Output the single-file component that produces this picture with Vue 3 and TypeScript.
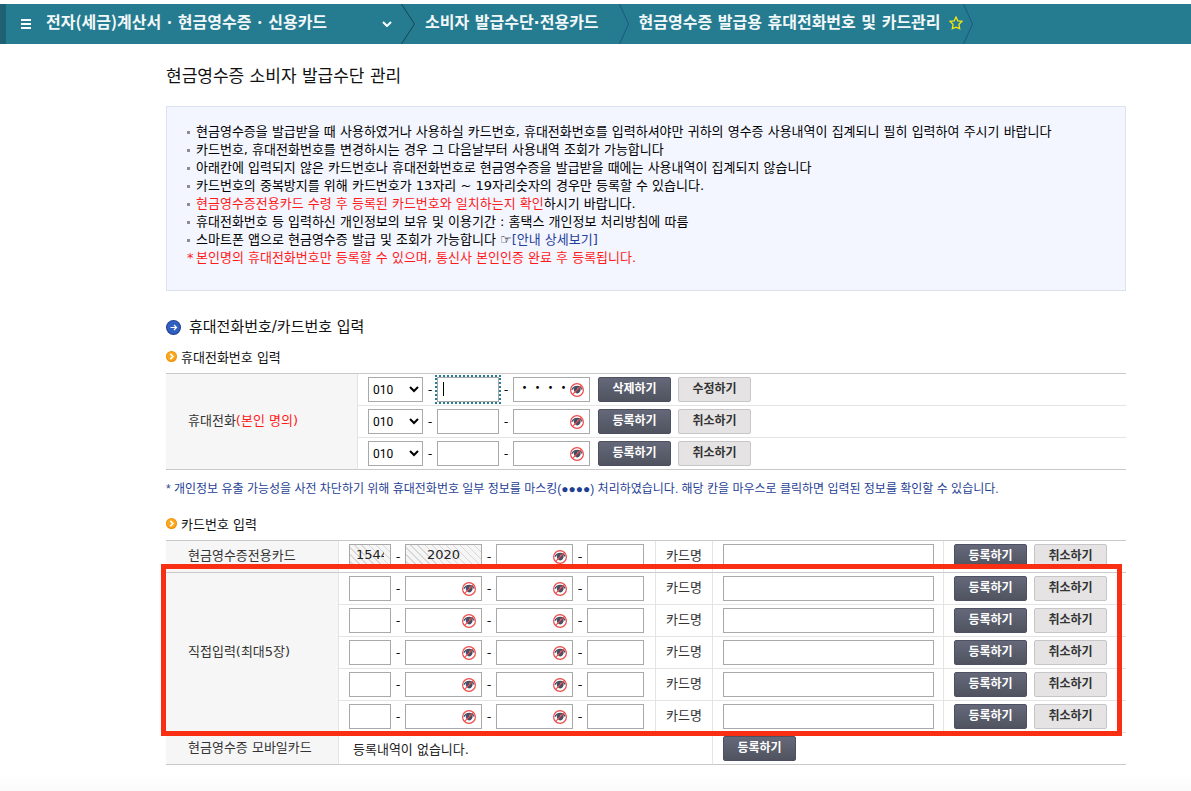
<script setup lang="ts">
import { ref } from 'vue'

interface Notice {
  mark?: string
  text: string
  link?: string
}

interface PhoneRow {
  id: number
  prefix: string
  middle: string
  last: string
  active: boolean
  primary: string
  secondary: string
}

interface CardField {
  size: string
  label: string
  masked: boolean
}

const notices: Notice[] = [
  { text: '현금영수증을 발급받을 때 사용하였거나 사용하실 카드번호, 휴대전화번호를 입력하셔야만 귀하의 영수증 사용내역이 집계되니 필히 입력하여 주시기 바랍니다' },
  { text: '카드번호, 휴대전화번호를 변경하시는 경우 그 다음날부터 사용내역 조회가 가능합니다' },
  { text: '아래칸에 입력되지 않은 카드번호나 휴대전화번호로 현금영수증을 발급받을 때에는 사용내역이 집계되지 않습니다' },
  { text: '카드번호의 중복방지를 위해 카드번호가 13자리 ~ 19자리숫자의 경우만 등록할 수 있습니다.' },
  { mark: '현금영수증전용카드 수령 후 등록된 카드번호와 일치하는지 확인', text: '하시기 바랍니다.' },
  { text: '휴대전화번호 등 입력하신 개인정보의 보유 및 이용기간 : 홈택스 개인정보 처리방침에 따름' },
  { text: '스마트폰 앱으로 현금영수증 발급 및 조회가 가능합니다 ☞', link: '[안내 상세보기]' },
]

const phones = ref<PhoneRow[]>([
  { id: 1, prefix: '010', middle: '', last: '・・・・', active: true, primary: '삭제하기', secondary: '수정하기' },
  { id: 2, prefix: '010', middle: '', last: '', active: false, primary: '등록하기', secondary: '취소하기' },
  { id: 3, prefix: '010', middle: '', last: '', active: false, primary: '등록하기', secondary: '취소하기' },
])

const cardFields: CardField[] = [
  { size: 'w-first', label: '카드번호 첫째 자리', masked: false },
  { size: 'w-mid', label: '카드번호 둘째 자리', masked: true },
  { size: 'w-mid', label: '카드번호 셋째 자리', masked: true },
  { size: 'w-last', label: '카드번호 넷째 자리', masked: false },
]

const fixedCard = ['1544', '2020', '', '']
</script>

<template>
  <div class="page">
    <svg class="defs" aria-hidden="true">
      <symbol id="eye-off" viewBox="0 0 14 14">
        <path d="M1.800 6.800C3 4.300 4.900 3.400 7.200 3.400s4.100 1 5 3.200" fill="none" stroke="#454f63" stroke-width="1.400" />
        <path d="M3.900 4.800C5.200 3.500 9.200 3.400 10.400 5c.9 2.300-.8 5.400-3.200 5.400S3.200 7.400 3.900 4.800z" fill="#454f63" />
        <circle cx="8" cy="5.400" r=".8" fill="#98a1b2" />
        <circle cx="7" cy="7" r="6.400" fill="none" stroke="#f04a4a" stroke-width="1.200" />
        <path d="M2.600 11.400L11.400 2.600" stroke="#f04a4a" stroke-width="1.200" />
      </symbol>
      <symbol id="orange-dot" viewBox="0 0 11 11">
        <circle cx="5.500" cy="5.500" r="5.500" fill="#f08c00" />
        <circle cx="5.500" cy="5.300" r="4.700" fill="#fba81c" />
        <path d="M4.300 2.900L6.900 5.500L4.300 8.100" fill="none" stroke="#fff" stroke-width="1.700" />
      </symbol>
    </svg>

    <header class="bar">
      <nav class="crumbs" aria-label="메뉴 경로">
        <button class="crumb crumb-root" type="button">
          <svg class="burger" viewBox="0 0 10 10" aria-hidden="true">
            <path d="M0 1h10M0 5h10M0 9h10" stroke="#fff" stroke-width="2" />
          </svg>
          <span>전자(세금)계산서 · 현금영수증 · 신용카드</span>
          <svg class="chevron" viewBox="0 0 10 6" aria-hidden="true">
            <path d="M1 1L5 5L9 1" fill="none" stroke="#fff" stroke-width="2" />
          </svg>
        </button>
        <svg class="sep sep-wide" viewBox="0 0 14 40" aria-hidden="true">
          <path d="M.5 0L13.500 20L.5 40" fill="none" stroke="#174653" />
        </svg>
        <a class="crumb" href="#">소비자 발급수단·전용카드</a>
        <svg class="sep" viewBox="0 0 10 40" aria-hidden="true">
          <path d="M.5 0L9.500 20L.5 40" fill="none" stroke="#1f5680" />
        </svg>
        <a class="crumb crumb-here" href="#">현금영수증 발급용 휴대전화번호 및 카드관리</a>
        <button class="star" type="button" aria-label="즐겨찾기">
          <svg viewBox="0 0 14 14" aria-hidden="true">
            <path d="M7 1L8.800 4.900L13 5.400L9.900 8.300L10.700 12.700L7 11.200L3.300 12.700L4.100 8.300L1 5.400L5.200 4.900Z" fill="none" stroke="#f5e614" stroke-width="1.300" />
          </svg>
        </button>
        <svg class="sep" viewBox="0 0 10 40" aria-hidden="true">
          <path d="M.5 0L9.500 20L.5 40" fill="none" stroke="#1f5680" />
        </svg>
      </nav>
    </header>

    <main class="content">
      <h1>현금영수증 소비자 발급수단 관리</h1>

      <section class="notice">
        <ul>
          <li v-for="(n, i) in notices" :key="i">
            <span v-if="n.mark" class="red">{{ n.mark }}</span>{{ n.text }}<a v-if="n.link" href="#">{{ n.link }}</a>
          </li>
          <li class="star-line red">본인명의 휴대전화번호만 등록할 수 있으며, 통신사 본인인증 완료 후 등록됩니다.</li>
        </ul>
      </section>

      <h2>
        <svg class="blue-dot" viewBox="0 0 15 15" aria-hidden="true">
          <circle cx="7.500" cy="7.500" r="7.500" fill="#1d3f8f" />
          <circle cx="7.500" cy="7.300" r="6.500" fill="#2f5fc0" />
          <path d="M4.500 7.500h6M8 5l2.500 2.500L8 10" fill="none" stroke="#fff" stroke-width="1.200" />
        </svg>
        휴대전화번호/카드번호 입력
      </h2>

      <h3 class="sub-phone">
        <svg class="orange" aria-hidden="true"><use href="#orange-dot" /></svg>
        휴대전화번호 입력
      </h3>
      <table class="grid">
        <colgroup>
          <col class="c-phone-label" />
          <col />
        </colgroup>
        <tbody>
          <tr v-for="(p, i) in phones" :key="p.id">
            <th v-if="i === 0" scope="rowgroup" :rowspan="phones.length">휴대전화<span class="red">(본인 명의)</span></th>
            <td>
              <div class="fields">
                <select v-model="p.prefix" aria-label="휴대전화 앞자리">
                  <option>010</option>
                  <option>011</option>
                  <option>016</option>
                </select>
                <span class="dash">-</span>
                <span class="box w-phone" :class="{ active: p.active }">
                  <input v-model="p.middle" type="text" aria-label="휴대전화 가운데 자리" />
                </span>
                <span class="dash">-</span>
                <span class="box w-mid masked">
                  <input v-model="p.last" type="text" aria-label="휴대전화 끝자리" />
                  <svg class="eye" aria-hidden="true"><use href="#eye-off" /></svg>
                </span>
                <span class="actions actions-near">
                  <button class="btn btn-dark" type="button">{{ p.primary }}</button>
                  <button class="btn btn-light" type="button">{{ p.secondary }}</button>
                </span>
              </div>
            </td>
          </tr>
        </tbody>
      </table>

      <p class="hint">* 개인정보 유출 가능성을 사전 차단하기 위해 휴대전화번호 일부 정보를 마스킹(●●●●) 처리하였습니다. 해당 칸을 마우스로 클릭하면 입력된 정보를 확인할 수 있습니다.</p>

      <h3 class="sub-card">
        <svg class="orange" aria-hidden="true"><use href="#orange-dot" /></svg>
        카드번호 입력
      </h3>
      <div class="card-area">
        <table class="grid">
          <colgroup>
            <col class="c-card-label" />
            <col class="c-card-number" />
            <col class="c-card-name" />
            <col />
            <col class="c-card-actions" />
          </colgroup>
          <tbody>
            <tr v-for="r in 6" :key="r" :class="{ strong: r === 1 }">
              <th v-if="r === 1" scope="row">현금영수증전용카드</th>
              <th v-if="r === 2" scope="rowgroup" rowspan="5">직접입력(최대5장)</th>
              <td>
                <div class="fields">
                  <template v-for="(f, k) in cardFields" :key="k">
                    <span v-if="k > 0" class="dash">-</span>
                    <span class="box" :class="[f.size, { hatched: r === 1 && k < 2 }]">
                      <input type="text" :aria-label="f.label" :value="r === 1 ? fixedCard[k] : ''" :readonly="r === 1 && k < 2" />
                      <svg v-if="f.masked && !(r === 1 && k < 2)" class="eye" aria-hidden="true"><use href="#eye-off" /></svg>
                    </span>
                  </template>
                </div>
              </td>
              <td class="name-cell"><label :for="'card-name-' + r">카드명</label></td>
              <td><span class="box w-full"><input :id="'card-name-' + r" type="text" /></span></td>
              <td>
                <span class="actions">
                  <button class="btn btn-dark" type="button">등록하기</button>
                  <button class="btn btn-light" type="button">취소하기</button>
                </span>
              </td>
            </tr>
            <tr>
              <th scope="row">현금영수증 모바일카드</th>
              <td colspan="2"><span class="empty">등록내역이 없습니다.</span></td>
              <td colspan="2"><span class="actions"><button class="btn btn-dark" type="button">등록하기</button></span></td>
            </tr>
          </tbody>
        </table>
        <div class="highlight" aria-hidden="true"></div>
      </div>
    </main>
  </div>
</template>

<style>
html,
body {
  margin: 0;
  background: #fff;
}
</style>

<style scoped>
.page {
  box-sizing: border-box;
  min-height: 100vh;
  padding-top: 4px;
  font-family: "DejaVu Sans", "Noto Sans CJK KR", sans-serif;
  font-size: 13px;
  line-height: 18px;
  color: #111;
  background: linear-gradient(to top, #fafafa, #fff 16px);
}
.page *,
.page *::before {
  box-sizing: border-box;
}
.defs {
  position: absolute;
  width: 0;
  height: 0;
}
svg {
  display: block;
  flex: none;
}
button,
input,
select {
  margin: 0;
  font-family: inherit;
}
.red {
  color: #ff1a1a;
}

.bar {
  background: #257b8f;
  border-left: 6px solid #1f6172;
}
.crumbs {
  display: flex;
  align-items: center;
  height: 40px;
  white-space: nowrap;
}
.crumb {
  padding: 0 20px 2px 10px;
  font-family: "DejaVu Sans", "Noto Sans CJK KR", sans-serif;
  font-size: 16px;
  font-weight: 700;
  line-height: 24px;
  color: #f2f8f9;
  text-decoration: none;
}
.crumb-root {
  display: flex;
  align-items: center;
  width: 395px;
  padding: 0 9px 0 15px;
  border: 0;
  background: none;
  font-family: "Noto Sans CJK KR", sans-serif;
}
.crumb-root span {
  padding-bottom: 6px;
}
.crumb-here {
  padding-right: 8px;
}
.burger {
  width: 10px;
  height: 10px;
  margin-right: 15px;
}
.chevron {
  width: 10px;
  height: 6px;
  margin-left: auto;
}
.sep {
  width: 10px;
  height: 40px;
}
.sep-wide {
  width: 14px;
}
.star {
  padding: 0 0 2px;
  border: 0;
  background: none;
}
.star svg {
  width: 14px;
  height: 14px;
}

.content {
  padding: 20px 65px 26px 166px;
}
h1,
h2,
h3,
p,
ul {
  margin: 0;
  padding: 0;
  font-weight: 400;
}
h1 {
  font-size: 17px;
  line-height: 24px;
}
.notice {
  margin-top: 18px;
  padding: 16px 20px 23px;
  border: 1px solid #dbe1ee;
  background: #f3f6ff;
}
.notice ul {
  list-style: none;
}
.notice li {
  position: relative;
  padding-left: 9px;
  color: #000;
  white-space: nowrap;
}
.notice li::before {
  content: "";
  position: absolute;
  left: 0;
  top: 8px;
  width: 3px;
  height: 3px;
  background: #8b8b90;
}
.notice li.star-line {
  color: #ff1a1a;
}
.notice li.star-line::before {
  content: "*";
  top: 0;
  background: none;
}
.notice a {
  color: #1f419b;
  text-decoration: none;
}

h2 {
  display: flex;
  align-items: center;
  gap: 8px;
  margin-top: 26px;
  font-size: 15px;
  line-height: 20px;
}
.blue-dot {
  width: 15px;
  height: 15px;
}
h3 {
  display: flex;
  align-items: flex-start;
  gap: 4px;
  font-size: 13px;
  line-height: 18px;
}
.orange {
  width: 11px;
  height: 11px;
  margin-top: 2px;
}
.sub-phone {
  margin: 12px 0 6px;
}
.sub-card {
  margin: 18px 0 6px;
}
.hint {
  margin-top: 10px;
  font-family: "Liberation Sans", "Noto Sans CJK KR", sans-serif;
  font-size: 12px;
  color: #1f3f94;
  white-space: nowrap;
}

.grid {
  width: 100%;
  table-layout: fixed;
  border-collapse: separate;
  border-spacing: 0;
  border-top: 1px solid #c9c9c9;
}
.c-phone-label {
  width: 192px;
}
.c-card-label {
  width: 173px;
}
.c-card-number {
  width: 317px;
}
.c-card-name {
  width: 57px;
}
.c-card-actions {
  width: 182px;
}
th {
  padding: 0 0 2px 22px;
  border-right: 1px solid #e4e4e4;
  border-bottom: 1px solid #c9c9c9;
  background: #f6f6f6;
  color: #333;
  font-weight: 400;
  text-align: left;
}
td {
  padding: 3px 9px 3px 10px;
  border-right: 1px solid #e4e4e4;
  border-bottom: 1px solid #e4e4e4;
  vertical-align: middle;
}
td:last-child {
  padding-right: 0;
  border-right: 0;
}
tr:last-child td,
tr.strong td {
  border-bottom-color: #c9c9c9;
}
.name-cell {
  padding: 2px 0 4px;
  color: #333;
  text-align: center;
}
.empty {
  display: block;
  padding: 3px 0 0 4px;
  color: #222;
}

.fields,
.actions {
  display: flex;
  align-items: center;
}
.actions {
  gap: 7px;
}
.actions-near {
  margin-left: 8px;
}
.dash {
  width: 14px;
  text-align: center;
}
.box {
  position: relative;
  display: block;
  height: 25px;
}
.box input {
  display: block;
  width: 100%;
  height: 25px;
  padding: 0 6px;
  border: 1px solid #a9a9a9;
  border-radius: 0;
  outline: 0;
  background: #fff;
  font-size: 13px;
  color: #222;
}
.masked input {
  padding: 0 4px 6px;
  font-family: "Noto Sans CJK KR", sans-serif;
  color: #000;
}
.hatched input {
  padding: 0 6px 5px;
  background: repeating-linear-gradient(45deg, #f5f5f5 0 4px, #d8d8d8 4px 5px);
  text-align: center;
}
.active input {
  outline: 2px dotted #257b8f;
}
.active::before {
  content: "";
  position: absolute;
  left: 6px;
  top: 5px;
  width: 1px;
  height: 14px;
  background: #000;
}
.w-phone {
  width: 62px;
}
.w-first {
  width: 42px;
}
.w-mid {
  width: 77px;
}
.w-last {
  width: 57px;
}
.w-full {
  width: 100%;
}
.eye {
  position: absolute;
  right: 6px;
  top: 6px;
  width: 14px;
  height: 14px;
}
select {
  width: 55px;
  height: 25px;
  padding: 0;
  border: 1px solid #a9a9a9;
  border-radius: 0;
  background: #fff;
  font-family: Roboto, sans-serif;
  font-size: 12px;
  color: #000;
}
.btn {
  width: 73px;
  height: 25px;
  padding: 0 0 3px;
  border-radius: 2px;
  font-family: "Noto Sans CJK KR", sans-serif;
  font-size: 12px;
  font-weight: 700;
  line-height: 18px;
}
.btn-dark {
  border: 1px solid #4d5060;
  background: linear-gradient(#646879, #50535f);
  color: #fff;
}
.btn-light {
  border: 1px solid #c6c6c6;
  background: #e5e3e4;
  color: #333;
}
.highlight {
  position: absolute;
  left: -5px;
  right: 4px;
  top: 24px;
  bottom: 29px;
  border: 5px solid #f92f14;
  pointer-events: none;
}
.card-area {
  position: relative;
}
</style>
